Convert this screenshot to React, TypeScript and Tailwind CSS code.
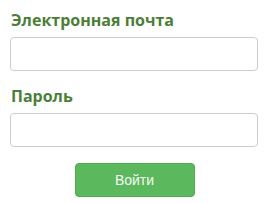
export default function App() {
  return (
    <div className="w-[271px] h-[203px] bg-white px-[10px] pt-[9px] font-['Open_Sans',sans-serif]">
      <form className="flex flex-col" onSubmit={(e) => e.preventDefault()}>
        <label htmlFor="email" className="text-[16px] font-bold leading-[22px] text-[#4b7e37] pl-px">
          Электронная почта
        </label>
        <input
          id="email"
          type="email"
          className="mt-[6px] h-[34px] w-[248px] rounded-[4px] border border-[#cccccc] bg-white px-3 outline-none"
        />
        <label htmlFor="password" className="mt-[14px] text-[16px] font-bold leading-[22px] text-[#4b7e37] pl-px">
          Пароль
        </label>
        <input
          id="password"
          type="password"
          className="mt-[6px] h-[34px] w-[248px] rounded-[4px] border border-[#cccccc] bg-white px-3 outline-none"
        />
        <div className="mt-[16px] flex justify-center pr-[2px]">
          <button
            type="submit"
            className="h-[34px] w-[120px] rounded-[4px] border border-[#4cae4c] bg-[#5cb85c] font-['Liberation_Sans',sans-serif] text-[14px] text-[#f4fbf4]"
          >
            Войти
          </button>
        </div>
      </form>
    </div>
  )
}
